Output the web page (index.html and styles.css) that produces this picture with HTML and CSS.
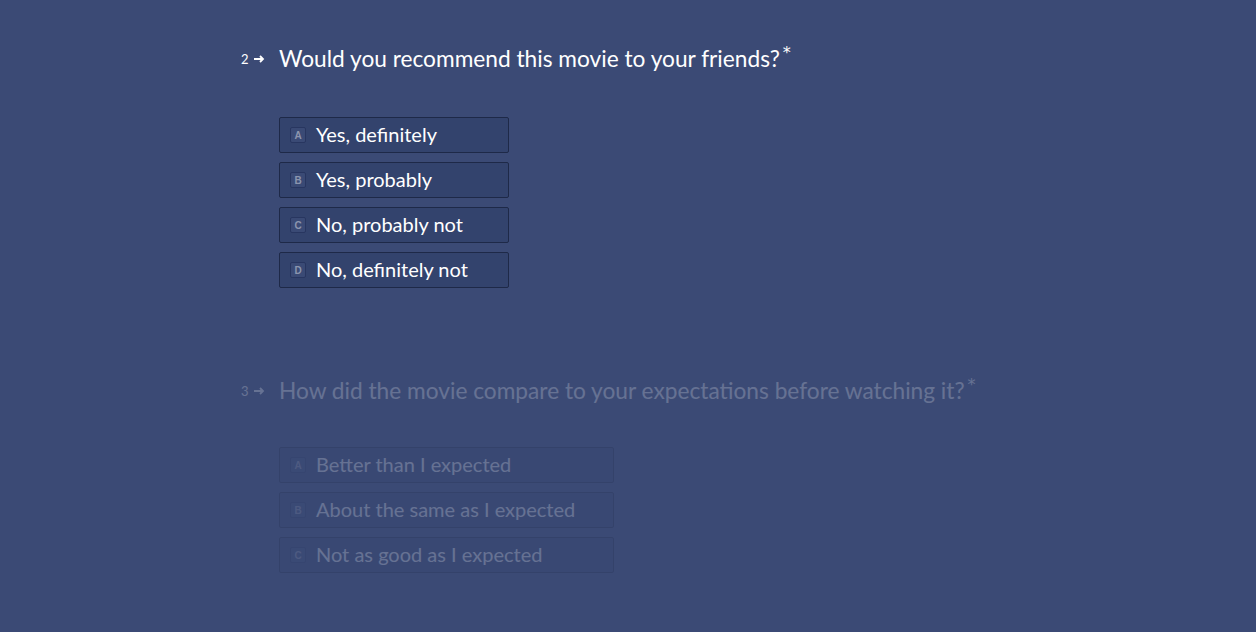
FILE: index.html
```html
<!DOCTYPE html>
<html>
<head>
<meta charset="utf-8">
<link rel="stylesheet" href="styles.css">
</head>
<body>
<main class="form">
  <section class="question">
    <div class="qnum"><span>2</span><svg class="arrow" width="11" height="8" viewBox="0 0 11 8"><path d="M0 4h8M6 1l3 3-3 3" fill="none" stroke="currentColor" stroke-width="1.8"/></svg></div>
    <div class="qbody">
      <h2 class="qtitle">Would you recommend this movie to your friends?<sup class="req">*</sup></h2>
      <div class="options narrow">
        <div class="option"><span class="key">A</span><span>Yes, definitely</span></div>
        <div class="option"><span class="key">B</span><span>Yes, probably</span></div>
        <div class="option"><span class="key">C</span><span>No, probably not</span></div>
        <div class="option"><span class="key">D</span><span>No, definitely not</span></div>
      </div>
    </div>
  </section>
  <section class="question faded">
    <div class="qnum"><span>3</span><svg class="arrow" width="11" height="8" viewBox="0 0 11 8"><path d="M0 4h8M6 1l3 3-3 3" fill="none" stroke="currentColor" stroke-width="1.8"/></svg></div>
    <div class="qbody">
      <h2 class="qtitle">How did the movie compare to your expectations before watching it?<sup class="req">*</sup></h2>
      <div class="options wide">
        <div class="option"><span class="key">A</span><span>Better than I expected</span></div>
        <div class="option"><span class="key">B</span><span>About the same as I expected</span></div>
        <div class="option"><span class="key">C</span><span>Not as good as I expected</span></div>
      </div>
    </div>
  </section>
</main>
</body>
</html>
```
FILE: styles.css
```css
html, body {
  margin: 0;
  padding: 0;
  background: #3b4a75;
  height: 100%;
  overflow: hidden;
}
body {
  font-family: Lato, "Open Sans", sans-serif;
  color: #ffffff;
}
.form {
  padding: 44px 0 0 241px;
  display: flex;
  flex-direction: column;
  gap: 88px;
}
.question {
  display: flex;
  align-items: flex-start;
}
.faded {
  opacity: 0.22;
}
.qnum {
  width: 38px;
  height: 30px;
  display: flex;
  align-items: center;
  gap: 5px;
  font-size: 13px;
}
.arrow {
  display: block;
}
.qtitle {
  margin: 0;
  font-weight: 400;
  font-size: 22.7px;
  line-height: 30px;
}
.req {
  font-family: "DejaVu Sans", sans-serif;
  font-weight: 400;
  font-size: 16px;
  line-height: 0;
  vertical-align: 9px;
  margin-left: 3px;
}
.options {
  margin-top: 43px;
  display: flex;
  flex-direction: column;
  gap: 9px;
}
.wide {
  margin-top: 41px;
}
.narrow .option { width: 230px; }
.wide .option { width: 335px; }
.option {
  box-sizing: border-box;
  height: 36px;
  display: flex;
  align-items: center;
  gap: 10px;
  padding: 0 0 2px 10px;
  background: #33436d;
  border: 1px solid #1e2948;
  border-radius: 2px;
  font-size: 20px;
}
.key {
  box-sizing: border-box;
  width: 16px;
  height: 16px;
  margin-top: 2px;
  display: flex;
  align-items: center;
  justify-content: center;
  font-family: "Liberation Sans", sans-serif;
  font-size: 10px;
  font-weight: 700;
  color: #8c95ae;
  background: #3a4a75;
  border: 1px solid #283660;
  border-radius: 2px;
}
```
